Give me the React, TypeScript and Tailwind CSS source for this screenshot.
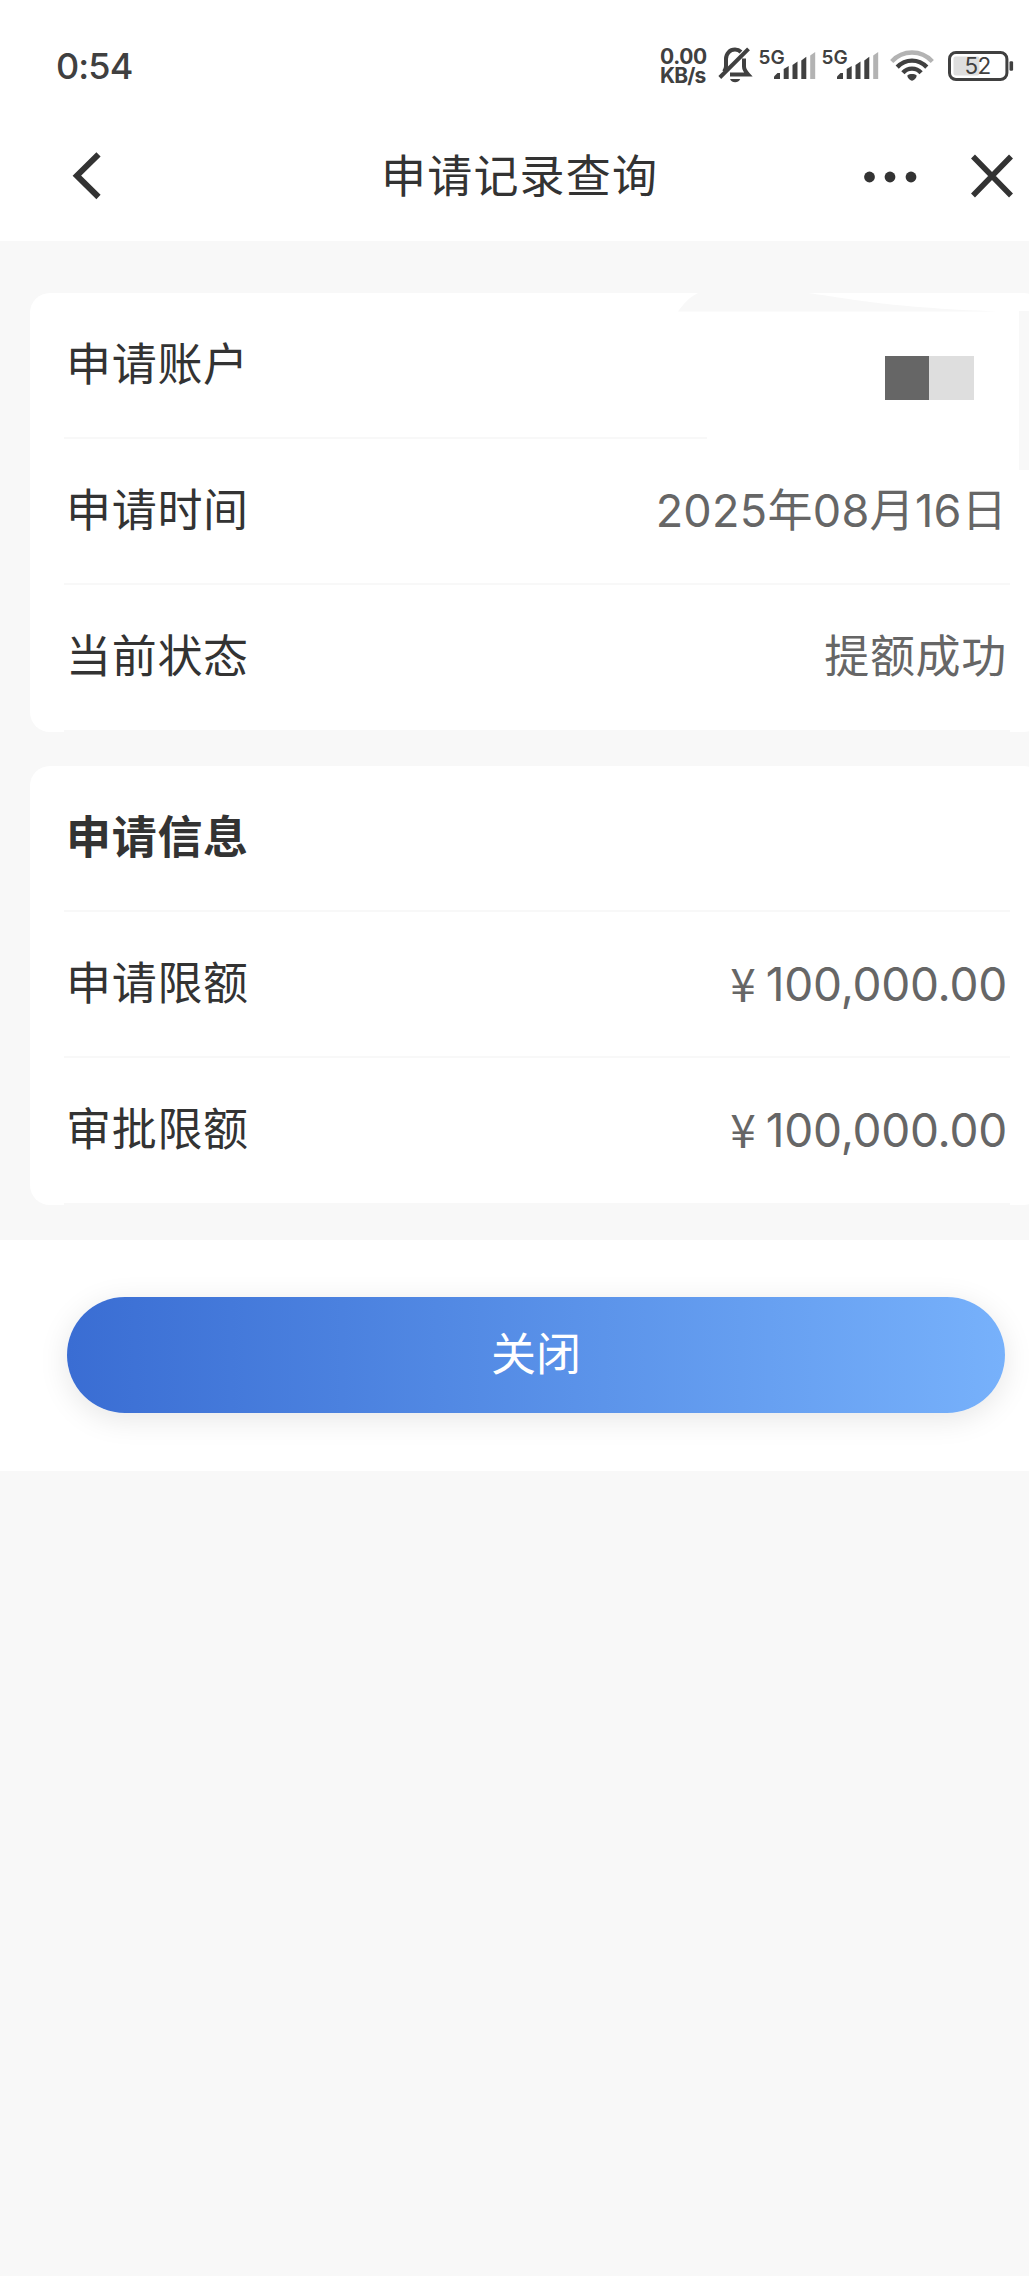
import type { ReactNode } from "react";

const CJK = "font-['Inter','Noto_Sans_CJK_SC',sans-serif]";

function BellOff() {
  return (
    <svg width="36" height="38" viewBox="0 0 36 38" fill="none" stroke="#404040" strokeWidth="4" className="shrink-0">
      <path d="M23 6C21.300 4.300 19.200 3.600 17 3.600c-5.300 0-9 4-9 9.400v7.200c0 2.200-.8 3.800-2 5.400" />
      <path d="M26 12.500v8c0 2.800 1.800 5.400 4.200 8.100H12" />
      <path d="M1.800 31.500 30.500 2.800" />
      <path d="M12 33h10.200c-1 2.200-2.800 3.200-5.100 3.200S13 35.200 12 33Z" fill="#404040" stroke="none" />
    </svg>
  );
}

function Signal() {
  return (
    <svg width="57" height="34" viewBox="0 0 57 34" overflow="visible" className="shrink-0 overflow-visible">
      <text x="-0.500" y="17" fontSize="19" fontWeight="600" fill="#404040" fontFamily="Inter, sans-serif">5G</text>
      <path d="M15 32v-2.500l3.500-3.500H21V32Z" fill="#404040" />
      <path d="M24.700 32V22l5-3v13Z" fill="#404040" />
      <path d="M33.500 32V18l5-3.600V32Z" fill="#404040" />
      <path d="M42.300 32V13.400l5-3.600V32Z" fill="#404040" />
      <path d="M51.200 32V8.500l5-3.600V32Z" fill="#b3b3b3" />
    </svg>
  );
}

function Wifi() {
  return (
    <svg width="44" height="33" viewBox="0 0 44 33" fill="none" strokeWidth="4.400" className="shrink-0">
      <path d="M1.700 12.400C7.200 6.600 14 3.500 22 3.500s14.800 3.100 20.300 8.900" stroke="#b3b3b3" />
      <path d="M7.200 18.100C11.200 14 16.200 11.600 22 11.600s10.800 2.400 14.800 6.500" stroke="#404040" />
      <path d="M12.900 23.700C15.300 21 18.300 19.600 22 19.600s6.700 1.400 9.100 4.100" stroke="#404040" />
      <path d="M17.300 26.500c2.500-1.900 6.900-1.900 9.400 0 0 2.300-2.500 4.800-4.700 5.300-2.200-.5-4.700-3-4.700-5.300Z" fill="#404040" />
    </svg>
  );
}

function Battery() {
  return (
    <svg width="66" height="30" viewBox="0 0 66 30" className="shrink-0">
      <rect x="5.500" y="5.500" width="26" height="19" rx="2" fill="#dedede" />
      <rect x="1.500" y="1.500" width="57.400" height="27" rx="6.500" fill="none" stroke="#404040" strokeWidth="3" />
      <rect x="61.500" y="10.300" width="3.600" height="9.400" rx="1.200" fill="#404040" />
      <text x="29.500" y="23" textAnchor="middle" fontSize="22.500" letterSpacing="-0.700" fill="#404040" fontFamily="Inter, sans-serif">52</text>
    </svg>
  );
}

function StatusBar() {
  return (
    <div className="flex h-[108px] items-start pl-[56px] text-[#404040]">
      <span className="mt-[44px] w-[604px] text-[36px] leading-[44px] font-medium tracking-[-0.900px]">0:54</span>
      <div className="mt-[48px] w-[58px] text-[21px] leading-[18.500px] font-bold tracking-[-0.400px]">
        <div>0.00</div>
        <div className="tracking-[-0.900px]">KB/s</div>
      </div>
      <div className="mt-[46px]"><BellOff /></div>
      <div className="mt-[47px] ml-[5px]"><Signal /></div>
      <div className="mt-[47px] ml-[6px]"><Signal /></div>
      <div className="mt-[49px] ml-[11px]"><Wifi /></div>
      <div className="mt-[50.500px] ml-[14px]"><Battery /></div>
    </div>
  );
}

function NavBar() {
  return (
    <div className="flex h-[133px] items-start pl-[72px] text-[#333]">
      <svg width="30" height="50" viewBox="0 0 30 50" fill="none" stroke="#333" strokeWidth="6" className="mt-[43px] shrink-0">
        <path d="M26.500 3.300 4.900 24.700 26.500 46" />
      </svg>
      <h1 className="mt-[37px] ml-[279px] w-[482px] text-[45px] leading-[64px] tracking-[1.200px]">申请记录查询</h1>
      <svg width="54" height="14" viewBox="0 0 54 14" fill="#333" className="mt-[62px] shrink-0">
        <circle cx="6.500" cy="7" r="5.400" />
        <circle cx="27" cy="7" r="5.400" />
        <circle cx="48" cy="7" r="5.400" />
      </svg>
      <svg width="42" height="44" viewBox="0 0 42 44" fill="none" stroke="#333" strokeWidth="5.500" className="mt-[46px] ml-[54px] shrink-0">
        <path d="M2 2.500 40 41.500M40 2.500 2 41.500" />
      </svg>
    </div>
  );
}

function Row({ label, children, bold }: { label: string; children?: ReactNode; bold?: boolean }) {
  return (
    <div className="flex h-[146.200px] items-start justify-between border-b-2 border-[#f8f8f8] pt-[40px] pr-[3px] pl-[2px] text-[45px] leading-[64px]">
      <span className={bold ? "font-bold tracking-[0.700px] text-[#333]" : "tracking-[0.700px] text-[#333]"}>{label}</span>
      {children}
    </div>
  );
}

function Card({ children }: { children: ReactNode }) {
  return <div className="relative w-[1014px] rounded-[20px] bg-white px-[34px]">{children}</div>;
}

function Amount({ value }: { value: string }) {
  return (
    <span className="flex text-[#666]">
      <span className="mt-[-2px] mr-[10px] font-['Noto_Sans_CJK_SC',sans-serif] text-[46px]">¥</span>
      <span className="text-[46px] tracking-[-0.250px]">{value}</span>
    </span>
  );
}

// masked account number, the blank area runs over the card edge
function AccountMask() {
  return (
    <>
      <div className="absolute top-[18px] left-[677px] h-[160px] w-[312px] bg-white" />
      <div className="absolute top-[18px] left-[989px] h-[159px] w-[25px] bg-[#f8f8f8]" />
      <svg width="320" height="19" viewBox="0 0 320 19" fill="#f8f8f8" className="absolute top-0 left-[648px]">
        <path d="M0 18.500C5 12 10 5 20 0h110c45 6 75 14 190 18.500Z" />
      </svg>
      <div className="absolute top-[63px] left-[855px] flex">
        <div className="h-[44px] w-[44px] bg-[#666]" />
        <div className="h-[44px] w-[45px] bg-[#dedede]" />
      </div>
    </>
  );
}

export default function App() {
  return (
    <div className={`h-[2287px] w-[1029px] overflow-hidden bg-white ${CJK}`}>
      <StatusBar />
      <NavBar />
      <div className="h-[2035px] bg-[#f8f8f8] pt-[52px]">
        <div className="flex flex-col gap-[34.500px] pl-[30px]">
          <Card>
            <Row label="申请账户" />
            <Row label="申请时间">
              <span className="tracking-[0.300px] text-[#666]">2025年08月16日</span>
            </Row>
            <Row label="当前状态">
              <span className="tracking-[0.700px] text-[#666]">提额成功</span>
            </Row>
            <AccountMask />
          </Card>
          <Card>
            <Row label="申请信息" bold />
            <Row label="申请限额"><Amount value="100,000.00" /></Row>
            <Row label="审批限额"><Amount value="100,000.00" /></Row>
          </Card>
        </div>
        <div className="mt-[35px] h-[231px] bg-white pt-[57px] pl-[67px]">
          <button className="h-[116px] w-[938px] rounded-full bg-linear-to-r from-[#3a6dd3] to-[#77b1fb] text-[45px] leading-[64px] text-white shadow-[0_6px_30px_rgba(0,0,0,0.1)]">
            关闭
          </button>
        </div>
      </div>
    </div>
  );
}
